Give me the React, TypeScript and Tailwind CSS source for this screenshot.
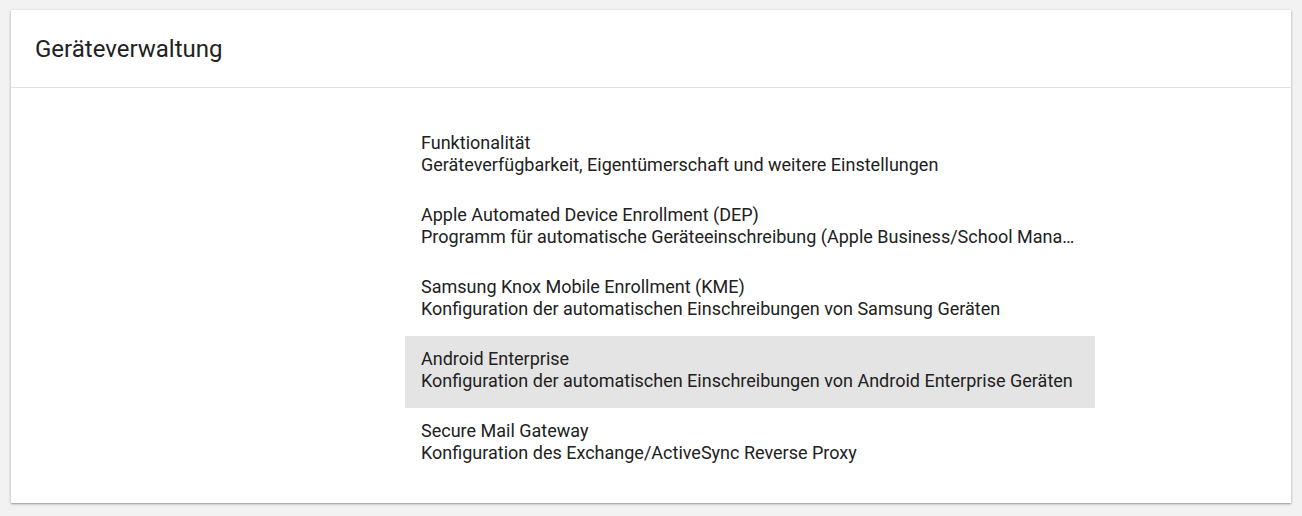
const entries = [
  {
    title: "Funktionalität",
    subtitle: "Geräteverfügbarkeit, Eigentümerschaft und weitere Einstellungen",
  },
  {
    title: "Apple Automated Device Enrollment (DEP)",
    subtitle:
      "Programm für automatische Geräteeinschreibung (Apple Business/School Manager)",
  },
  {
    title: "Samsung Knox Mobile Enrollment (KME)",
    subtitle: "Konfiguration der automatischen Einschreibungen von Samsung Geräten",
  },
  {
    title: "Android Enterprise",
    subtitle:
      "Konfiguration der automatischen Einschreibungen von Android Enterprise Geräten",
    active: true,
  },
  {
    title: "Secure Mail Gateway",
    subtitle: "Konfiguration des Exchange/ActiveSync Reverse Proxy",
  },
];

export default function App() {
  return (
    <div
      className="min-h-[516px] bg-[#f2f2f2] pt-[10px] px-[11px] pb-[13px] text-[#212121]"
      style={{ fontFamily: "Roboto, 'Noto Sans', sans-serif" }}
    >
      <div className="bg-white shadow-[0_1px_3px_rgba(0,0,0,0.25),0_1px_1px_rgba(0,0,0,0.14)]">
        <div className="h-[78px] px-6 pt-[25px] border-b border-[#e0e0e0]">
          <h1 className="text-[24px] leading-7 font-normal">Geräteverwaltung</h1>
        </div>
        <div className="pt-8 pb-[23px]">
          <ul className="ml-[394px] w-[690px]">
            {entries.map((e) => (
              <li
                key={e.title}
                className={`h-[72px] px-4 pt-3 text-[18px] leading-[22px] cursor-pointer ${
                  e.active ? "bg-[#e4e4e4]" : "hover:bg-[#f0f0f0]"
                }`}
              >
                <div className="truncate">{e.title}</div>
                <div className="truncate">{e.subtitle}</div>
              </li>
            ))}
          </ul>
        </div>
      </div>
    </div>
  );
}
